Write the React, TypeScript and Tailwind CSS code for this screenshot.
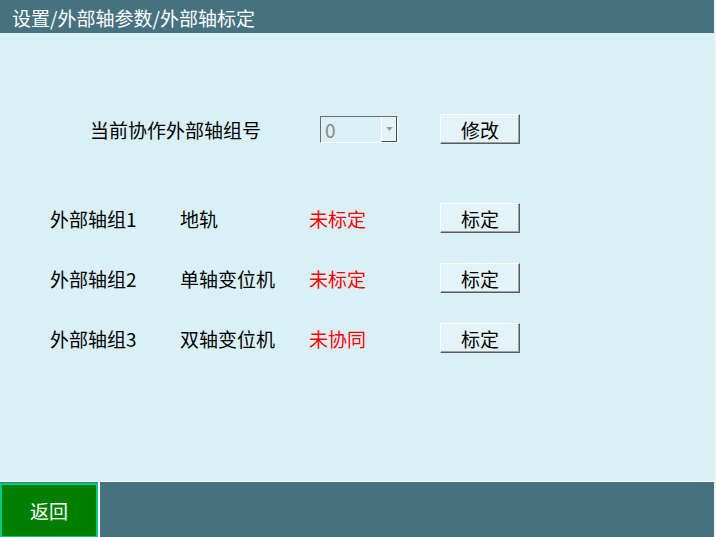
import React from "react";

const font = { fontFamily: '"Noto Sans CJK SC", "Noto Sans", sans-serif' };

function Btn({ children }: { children: React.ReactNode }) {
  return (
    <div className="w-[80px] h-[30px] shrink-0 flex items-center justify-center bg-[#e4f3f8] border border-t-white border-l-white border-r-[#5a5a5a] border-b-[#5a5a5a] shadow-[inset_-1px_-1px_0_#a0a0a0] text-[19px] text-black leading-none">
      {children}
    </div>
  );
}

const rows = [
  { a: "外部轴组1", b: "地轨", c: "未标定" },
  { a: "外部轴组2", b: "单轴变位机", c: "未标定" },
  { a: "外部轴组3", b: "双轴变位机", c: "未协同" },
];

export default function App() {
  return (
    <div className="w-[716px] h-[537px] flex bg-[#f0f0f0]" style={font}>
      <div className="w-[714px] h-full flex flex-col bg-[#d9f0f7]">
        <div className="h-[33px] bg-[#467280] text-white text-[19px] leading-none flex items-center pl-[12px] pt-[2px]">
          设置/外部轴参数/外部轴标定
        </div>
        <div className="flex-1 flex flex-col">
          <div className="flex items-center mt-[81px] h-[30px]">
            <div className="w-[320px] shrink-0 pl-[90px] text-[19px] leading-none text-black whitespace-nowrap">当前协作外部轴组号</div>
            <div className="w-[78px] h-[27px] shrink-0 flex border border-t-[#6d6d6d] border-l-[#6d6d6d] border-b-white border-r-white bg-[#d9f0f7]">
              <div className="flex-1 flex items-center pl-[4px] text-[19px] leading-none text-[#8a8a8a]">0</div>
              <div className="w-[16px] h-full flex items-center justify-center border-l border-l-white border-r border-r-[#4a4a4a] border-b border-b-[#4a4a4a] bg-[#e4f3f8]">
                <svg width="7" height="4" viewBox="0 0 7 4"><path d="M0 0h7L3.5 4z" fill="#9a9a9a" /></svg>
              </div>
            </div>
            <div className="ml-[42px]"><Btn>修改</Btn></div>
          </div>
          <div className="flex flex-col gap-[30px] mt-[59px]">
            {rows.map((r) => (
              <div key={r.a} className="flex items-center h-[30px] text-[19px] leading-none">
                <div className="w-[180px] shrink-0 pl-[50px] text-black whitespace-nowrap">{r.a}</div>
                <div className="w-[129px] shrink-0 text-black whitespace-nowrap">{r.b}</div>
                <div className="w-[131px] shrink-0 text-[#ff0000] whitespace-nowrap">{r.c}</div>
                <Btn>标定</Btn>
              </div>
            ))}
          </div>
        </div>
        <div className="h-[56px] border-t border-t-white bg-[#467280] flex">
          <div className="w-[98px] h-full border-2 border-[#00cc88] bg-[#007f00] text-white text-[19px] leading-none flex items-center justify-center mt-[1px]">
            返回
          </div>
          <div className="w-[2px] h-full bg-white" />
        </div>
      </div>
    </div>
  );
}
